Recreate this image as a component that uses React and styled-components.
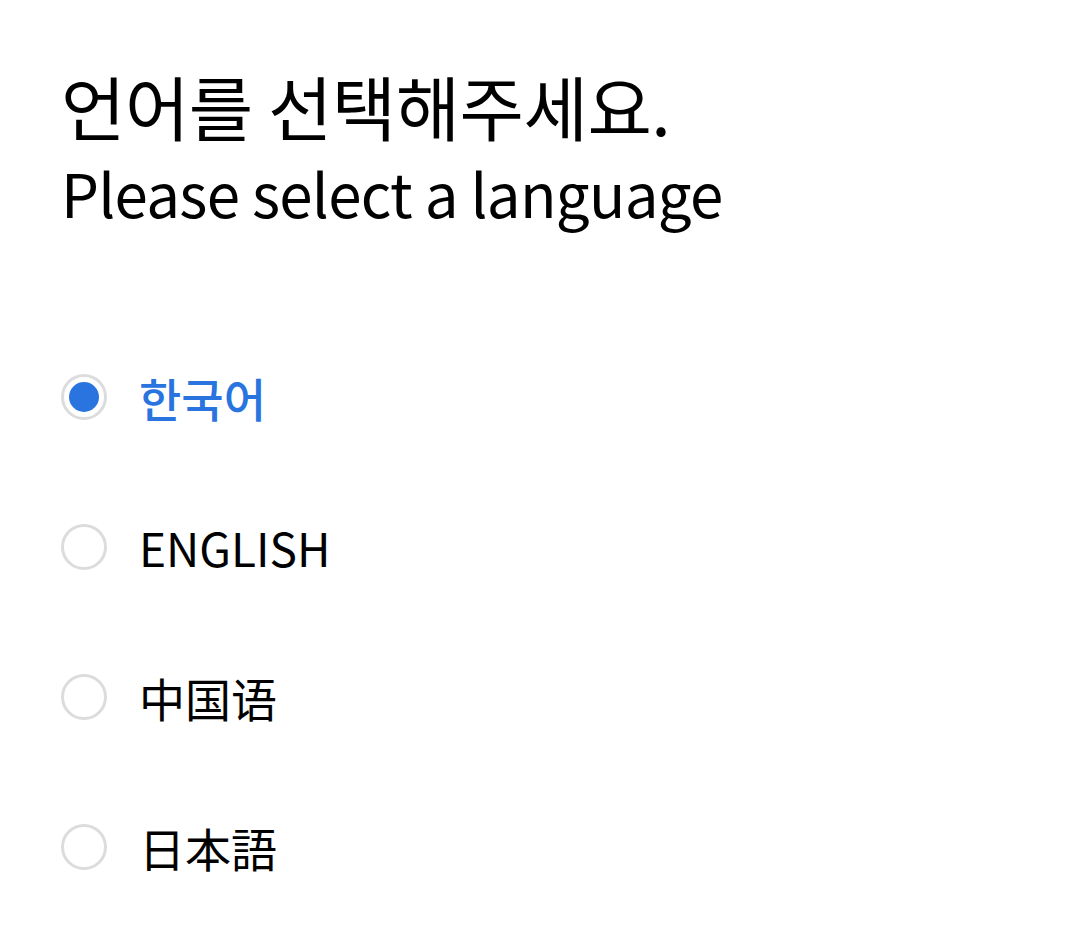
import React, { useState } from 'react';
import styled, { createGlobalStyle } from 'styled-components';

const GlobalStyle = createGlobalStyle`
	html, body {
		margin: 0;
		padding: 0;
		background: #fff;
	}
	body {
		font-family: "Noto Sans CJK KR", "Noto Sans", sans-serif;
		color: #000;
	}
`;

const languages = [
	{ id: 'ko', label: '한국어', lang: 'ko' },
	{ id: 'en', label: 'ENGLISH', lang: 'en' },
	{ id: 'zh', label: '中国语', lang: 'zh' },
	{ id: 'ja', label: '日本語', lang: 'ja' }
];

const ui = {
	Page: styled.main`
		width: 1080px;
		height: 925px;
		box-sizing: border-box;
		padding: 64px 61px 0;
	`,
	Header: styled.header`
		display: flex;
		flex-direction: column;
	`,
	Title: styled.h1`
		margin: 0;
		font-size: 70px;
		font-weight: 400;
		line-height: 84px;
		letter-spacing: -0.5px;
	`,
	Subtitle: styled.p`
		margin: 0;
		font-size: 60px;
		font-weight: 400;
		line-height: 88px;
		letter-spacing: -0.7px;
	`,
	List: styled.ul`
		list-style: none;
		margin: 86px 0 0;
		padding: 0;
		display: flex;
		flex-direction: column;
	`,
	Option: styled.li`
		height: 150px;
		display: flex;
		align-items: center;
		gap: 32px;
		cursor: pointer;
	`,
	Radio: styled.span`
		width: 46px;
		height: 46px;
		box-sizing: border-box;
		border-radius: 50%;
		border: 3px solid #dcdcdc;
		display: flex;
		align-items: center;
		justify-content: center;

		&::after {
			content: '';
			width: 30px;
			height: 30px;
			border-radius: 50%;
			background: ${(p) => (p.$checked ? '#2a74e0' : 'transparent')};
		}
	`,
	Label: styled.span`
		font-size: 46px;
		line-height: 1;
		font-weight: ${(p) => (p.$checked ? 500 : 400)};
		color: ${(p) => (p.$checked ? '#2a74e0' : '#000')};
		font-family: ${(p) =>
			p.lang === 'zh'
				? '"Noto Sans CJK SC", sans-serif'
				: p.lang === 'ja'
				? '"Noto Sans CJK JP", sans-serif'
				: '"Noto Sans CJK KR", sans-serif'};
	`
};

const App = () => {
	const [selected, setSelected] = useState('ko');

	return (
		<React.Fragment>
			<GlobalStyle />
			<ui.Page>
				<ui.Header>
					<ui.Title>언어를 선택해주세요.</ui.Title>
					<ui.Subtitle>Please select a language</ui.Subtitle>
				</ui.Header>
				<ui.List>
					{languages.map((item) => (
						<ui.Option key={item.id} onClick={() => setSelected(item.id)}>
							<ui.Radio $checked={selected === item.id} />
							<ui.Label lang={item.lang} $checked={selected === item.id}>
								{item.label}
							</ui.Label>
						</ui.Option>
					))}
				</ui.List>
			</ui.Page>
		</React.Fragment>
	);
};

export default App;
